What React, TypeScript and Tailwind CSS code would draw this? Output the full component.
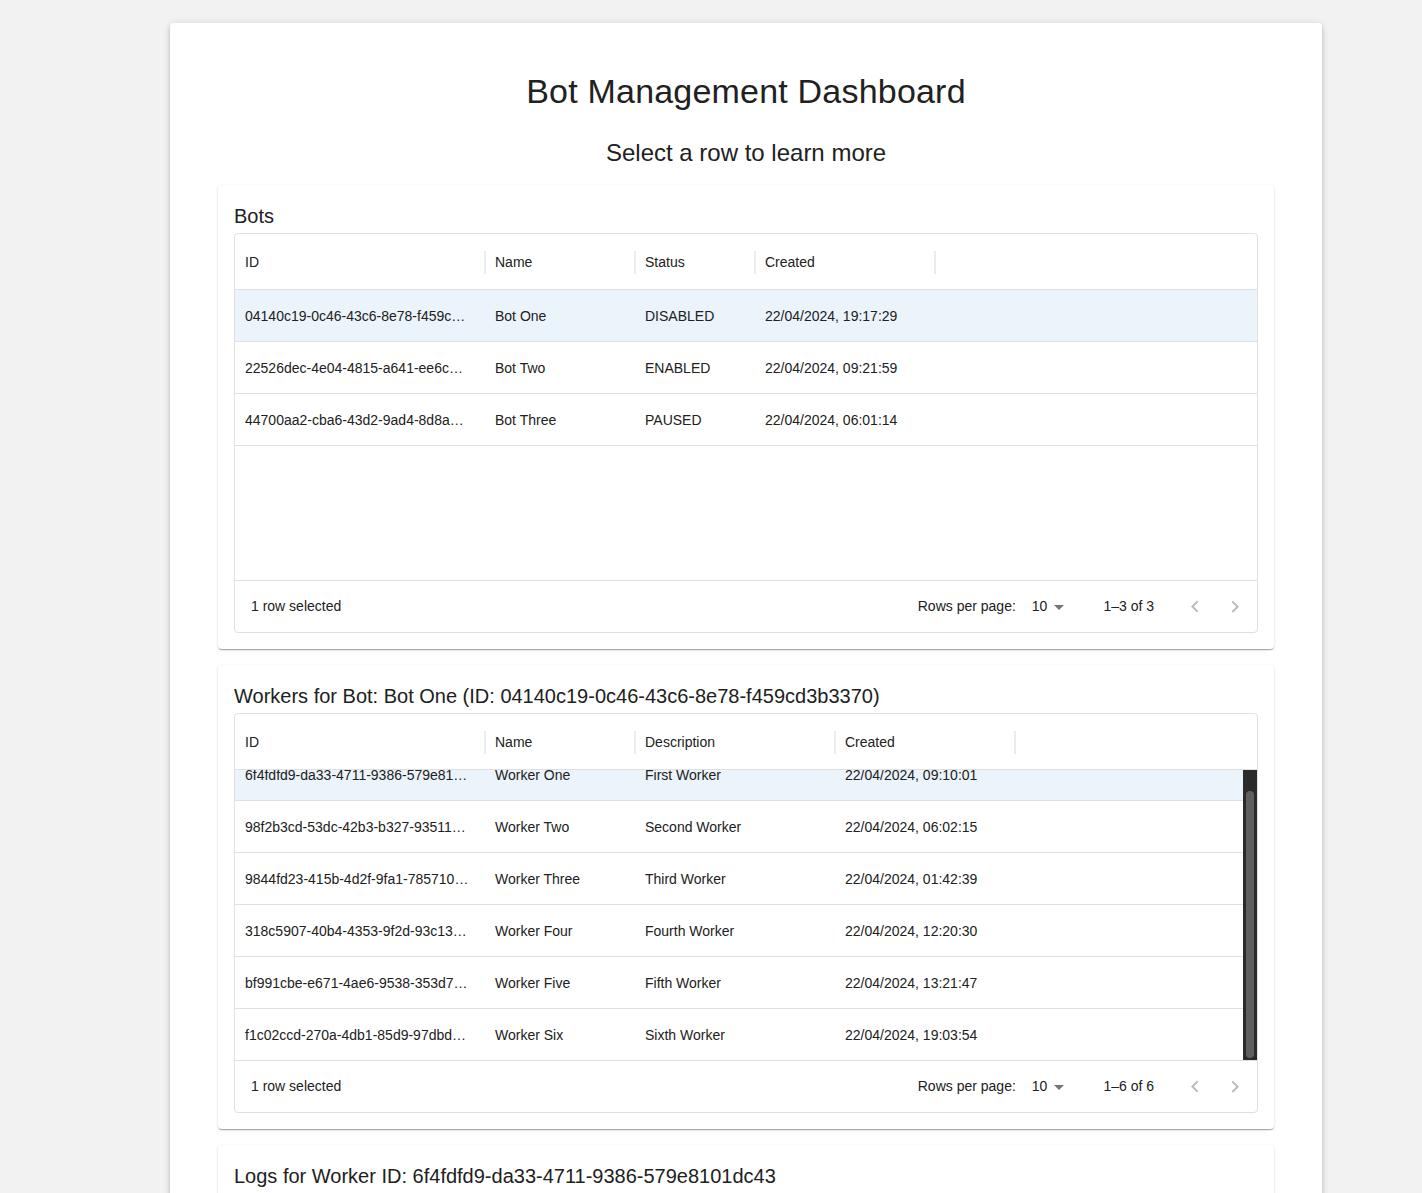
import React from "react";

const font = { fontFamily: '"Liberation Sans", Arial, sans-serif' };

type Col = { label: string; w: number };

const botCols: Col[] = [
  { label: "ID", w: 250 },
  { label: "Name", w: 150 },
  { label: "Status", w: 120 },
  { label: "Created", w: 180 },
];

const workerCols: Col[] = [
  { label: "ID", w: 250 },
  { label: "Name", w: 150 },
  { label: "Description", w: 200 },
  { label: "Created", w: 180 },
];

const bots = [
  ["04140c19-0c46-43c6-8e78-f459c…", "Bot One", "DISABLED", "22/04/2024, 19:17:29"],
  ["22526dec-4e04-4815-a641-ee6c…", "Bot Two", "ENABLED", "22/04/2024, 09:21:59"],
  ["44700aa2-cba6-43d2-9ad4-8d8a…", "Bot Three", "PAUSED", "22/04/2024, 06:01:14"],
];

const workers = [
  ["6f4fdfd9-da33-4711-9386-579e81…", "Worker One", "First Worker", "22/04/2024, 09:10:01"],
  ["98f2b3cd-53dc-42b3-b327-93511…", "Worker Two", "Second Worker", "22/04/2024, 06:02:15"],
  ["9844fd23-415b-4d2f-9fa1-785710…", "Worker Three", "Third Worker", "22/04/2024, 01:42:39"],
  ["318c5907-40b4-4353-9f2d-93c13…", "Worker Four", "Fourth Worker", "22/04/2024, 12:20:30"],
  ["bf991cbe-e671-4ae6-9538-353d7…", "Worker Five", "Fifth Worker", "22/04/2024, 13:21:47"],
  ["f1c02ccd-270a-4db1-85d9-97dbd…", "Worker Six", "Sixth Worker", "22/04/2024, 19:03:54"],
];

function Chevron({ dir }: { dir: "left" | "right" }) {
  return (
    <svg width="24" height="24" viewBox="0 0 24 24" fill="#bdbdbd">
      {dir === "left" ? (
        <path d="M15.41 16.09l-4.58-4.59 4.58-4.59L14 5.5l-6 6 6 6z" />
      ) : (
        <path d="M8.59 16.34l4.58-4.59-4.58-4.59L10 5.75l6 6-6 6z" />
      )}
    </svg>
  );
}

function Footer({ range }: { range: string }) {
  return (
    <div className="h-[52px] border-t border-[#e0e0e0] flex items-center justify-between pl-4 pr-[2px] text-[14px] text-[#212121] shrink-0">
      <span>1 row selected</span>
      <div className="flex items-center">
        <span>Rows per page:</span>
        <div className="ml-[16px] flex items-center">
          <span>10</span>
          <svg width="24" height="24" viewBox="0 0 24 24" fill="#757575">
            <path d="M7 10l5 5 5-5z" />
          </svg>
        </div>
        <span className="ml-[32px]">{range}</span>
        <div className="ml-5 flex items-center">
          <div className="w-10 h-10 flex items-center justify-center ml-[1px]">
            <Chevron dir="left" />
          </div>
          <div className="w-10 h-10 flex items-center justify-center">
            <Chevron dir="right" />
          </div>
        </div>
      </div>
    </div>
  );
}

function Header({ cols }: { cols: Col[] }) {
  return (
    <div className="h-[56px] border-b border-[#e0e0e0] flex shrink-0">
      {cols.map((c) => (
        <div
          key={c.label}
          style={{ width: c.w }}
          className="relative h-full flex items-center px-2.5 pt-[2px] text-[14px] text-[#212121] shrink-0"
        >
          {c.label}
          <div className="absolute right-[-1px] top-[17px] w-[2px] h-[23px] bg-[#ececec]" />
        </div>
      ))}
    </div>
  );
}

function Row({ cols, cells, selected }: { cols: Col[]; cells: string[]; selected?: boolean }) {
  return (
    <div
      className={`h-[52px] border-b border-[#e0e0e0] flex shrink-0 ${selected ? "bg-[#ebf3fb]" : "bg-white"}`}
    >
      {cols.map((c, i) => (
        <div
          key={c.label}
          style={{ width: c.w }}
          className="h-full flex items-center px-2.5 pt-[2px] text-[14px] text-[#212121] whitespace-nowrap overflow-hidden shrink-0"
        >
          {cells[i]}
        </div>
      ))}
    </div>
  );
}

function Section({ title, children }: { title: string; children: React.ReactNode }) {
  return (
    <div className="bg-white rounded-[4px] shadow-[0_2px_1px_-1px_rgba(0,0,0,0.2),0_1px_1px_0_rgba(0,0,0,0.14),0_1px_3px_0_rgba(0,0,0,0.12)] p-4 mb-4">
      <div className="text-[20px] leading-[32px] text-[#212121] -mt-[1px] mb-[1px]">{title}</div>
      {children}
    </div>
  );
}

export default function App() {
  return (
    <div style={font} className="min-h-screen bg-[#f2f2f2] pt-[23px] pb-10">
      <div className="ml-[170px] w-[1152px] bg-white rounded-[4px] shadow-[0_3px_3px_-2px_rgba(0,0,0,0.2),0_3px_4px_0_rgba(0,0,0,0.14),0_1px_8px_0_rgba(0,0,0,0.12)] px-12 pt-12 pb-12">
        <h1 className="text-[34px] leading-[42px] text-center text-[#212121] mb-[25px] -mt-[1px] tracking-[0.2px]">
          Bot Management Dashboard
        </h1>
        <h2 className="text-[24px] leading-[32px] text-center text-[#212121] mb-4">
          Select a row to learn more
        </h2>

        <Section title="Bots">
          <div className="h-[400px] border border-[#e0e0e0] rounded-[4px] flex flex-col">
            <Header cols={botCols} />
            <div className="flex-1 flex flex-col overflow-hidden">
              {bots.map((b, i) => (
                <Row key={i} cols={botCols} cells={b} selected={i === 0} />
              ))}
            </div>
            <Footer range="1–3 of 3" />
          </div>
        </Section>

        <Section title="Workers for Bot: Bot One (ID: 04140c19-0c46-43c6-8e78-f459cd3b3370)">
          <div className="h-[400px] border border-[#e0e0e0] rounded-[4px] flex flex-col">
            <Header cols={workerCols} />
            <div className="flex-1 flex overflow-hidden">
              <div className="flex-1 overflow-hidden">
                <div className="mt-[-21px] flex flex-col">
                  {workers.map((w, i) => (
                    <Row key={i} cols={workerCols} cells={w} selected={i === 0} />
                  ))}
                </div>
              </div>
              <div className="w-[14px] bg-[#2b2b2b] shrink-0 pt-[21px] pb-[2px] px-[3px] flex">
                <div className="flex-1 rounded-full bg-[#5f5f5f]" />
              </div>
            </div>
            <Footer range="1–6 of 6" />
          </div>
        </Section>

        <Section title="Logs for Worker ID: 6f4fdfd9-da33-4711-9386-579e8101dc43">
          <div className="h-[400px] border border-[#e0e0e0] rounded-[4px] flex flex-col">
            <Header
              cols={[
                { label: "ID", w: 250 },
                { label: "Message", w: 300 },
                { label: "Created", w: 180 },
              ]}
            />
            <div className="flex-1" />
            <Footer range="0–0 of 0" />
          </div>
        </Section>
      </div>
    </div>
  );
}
